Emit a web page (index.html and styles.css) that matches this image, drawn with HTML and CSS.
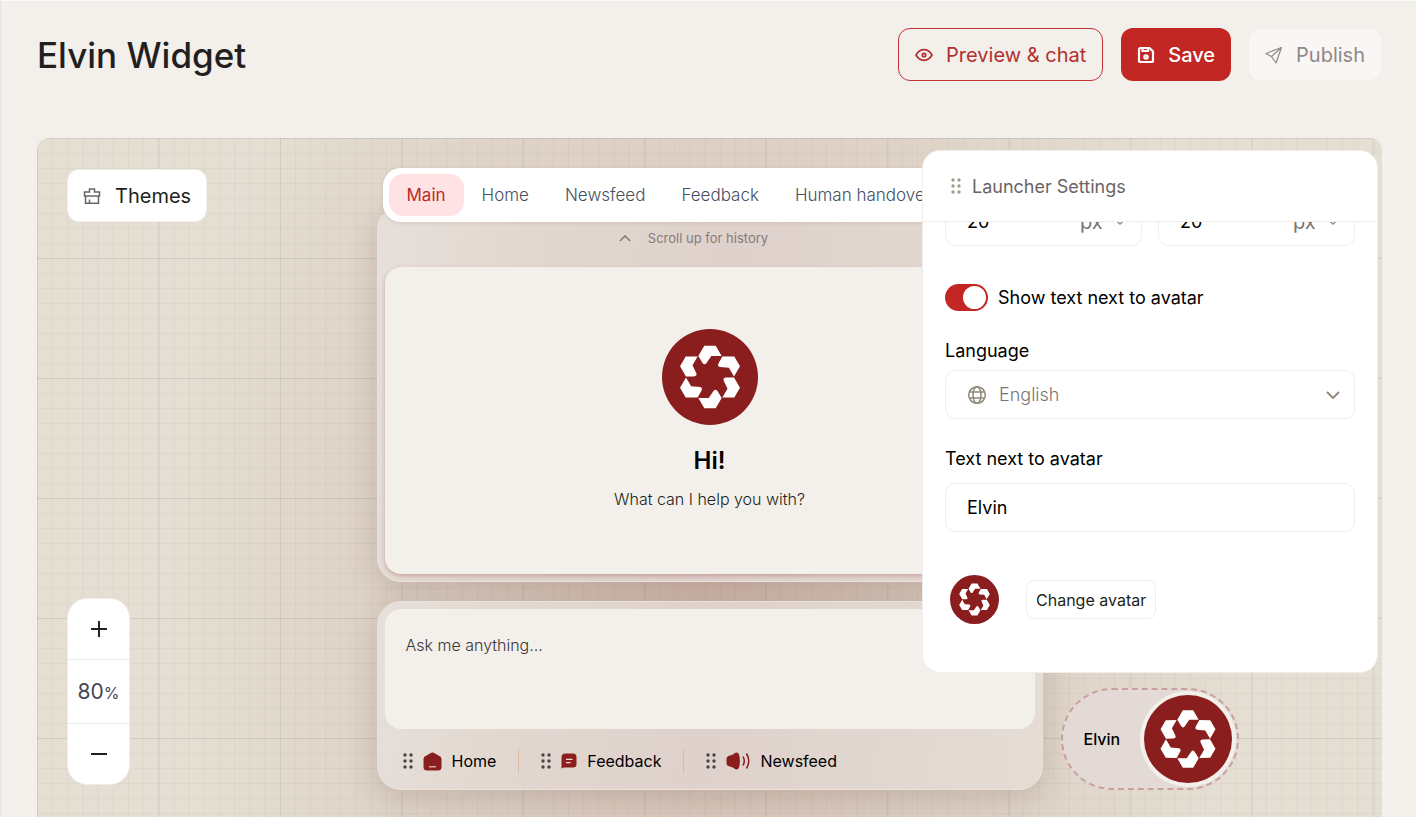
FILE: index.html
```html
<!DOCTYPE html>
<html lang="en">
<head>
    <meta charset="UTF-8">
    <meta name="viewport" content="width=device-width, initial-scale=1.0">
    <title>Elvin Widget</title>
    <link rel="stylesheet" href="styles.css">
</head>
<body>
    <!-- Shared icons -->
    <svg class="sprite" aria-hidden="true">
        <defs>
            <path id="petal" d="M-35-63L-17-94H17L35-63H4L-11-41Q-17-34-23-43Z"/>
            <symbol id="logo" viewBox="-144 -144 288 288">
                <circle r="144" fill="#8a1e1e"/>
                <g fill="#fff">
                    <use href="#petal"/>
                    <use href="#petal" transform="rotate(60)"/>
                    <use href="#petal" transform="rotate(120)"/>
                    <use href="#petal" transform="rotate(180)"/>
                    <use href="#petal" transform="rotate(240)"/>
                    <use href="#petal" transform="rotate(300)"/>
                </g>
            </symbol>
            <symbol id="grip" viewBox="0 0 10 18">
                <circle cx="2" cy="3" r="1.7"/><circle cx="8" cy="3" r="1.7"/>
                <circle cx="2" cy="9" r="1.7"/><circle cx="8" cy="9" r="1.7"/>
                <circle cx="2" cy="15" r="1.7"/><circle cx="8" cy="15" r="1.7"/>
            </symbol>
            <symbol id="chevron" viewBox="0 0 14 8">
                <path d="M1 1l6 6 6-6" fill="none" stroke="currentColor" stroke-width="1.8"/>
            </symbol>
        </defs>
    </svg>

    <header class="header">
        <h1>Elvin Widget</h1>
        <div class="actions">
            <button type="button" class="btn btn-outline">
                <svg width="18" height="18" viewBox="0 0 18 18" fill="none" stroke="currentColor" stroke-width="1.7">
                    <path d="M1 9C3 5.500 5.800 3.700 9 3.700S15 5.500 17 9C15 12.500 12.200 14.300 9 14.300S3 12.500 1 9Z"/>
                    <circle cx="9" cy="9" r="1.700"/>
                </svg>
                Preview &amp; chat
            </button>
            <button type="button" class="btn btn-save">
                <svg width="18" height="18" viewBox="0 0 18 18" fill="none" stroke="currentColor" stroke-width="2.200">
                    <path d="M3.500 2H12.500L16 5.500V14.500Q16 16 14.500 16H3.500Q2 16 2 14.500V3.500Q2 2 3.500 2Z"/>
                    <path d="M5.500 2V5H11V2"/>
                    <circle cx="9" cy="11" r="1.700"/>
                </svg>
                Save
            </button>
            <button type="button" class="btn btn-publish" disabled>
                <svg width="18" height="18" viewBox="0 0 18 18" fill="none" stroke="currentColor" stroke-width="1.200" stroke-linejoin="round">
                    <path d="M16.500 1.500L1 7.500L6.500 10.500L11 17Z"/>
                    <path d="M16.500 1.500L6.500 10.500"/>
                </svg>
                Publish
            </button>
        </div>
    </header>

    <main class="canvas">
        <div class="stage">
            <div class="tools">
                <button type="button" class="themes">
                    <svg width="18" height="18" viewBox="0 0 18 18" fill="none" stroke="#6b6464" stroke-width="1.500">
                        <path d="M1.500 9V5H6.500V2H11.500V5H16.500V9Z"/>
                        <path d="M2.500 9V16.200H15.500V9M6.500 16V12.500"/>
                    </svg>
                    Themes
                </button>
                <div class="zoom">
                    <button type="button" aria-label="Zoom in">
                        <svg width="16" height="16" viewBox="0 0 16 16" stroke="#231f20" stroke-width="2"><path d="M0 8H16M8 0V16"/></svg>
                    </button>
                    <div class="zoom-value">80<small>%</small></div>
                    <button type="button" aria-label="Zoom out">
                        <svg width="16" height="16" viewBox="0 0 16 16" stroke="#231f20" stroke-width="2"><path d="M0 8H16"/></svg>
                    </button>
                </div>
            </div>

            <div class="chat">
                <nav class="tabs">
                    <a href="#main" class="active">Main</a>
                    <a href="#home">Home</a>
                    <a href="#newsfeed">Newsfeed</a>
                    <a href="#feedback">Feedback</a>
                    <a href="#handover">Human handover</a>
                </nav>

                <section class="glass history">
                    <p class="scroll-up">
                        <svg class="up" width="12" height="7"><use href="#chevron"/></svg>
                        Scroll up for history
                    </p>
                    <div class="welcome">
                        <svg width="96" height="96"><use href="#logo"/></svg>
                        <h2>Hi!</h2>
                        <p>What can I help you with?</p>
                    </div>
                </section>

                <section class="glass composer">
                    <textarea aria-label="Message" placeholder="Ask me anything..."></textarea>
                    <div class="menu">
                        <a href="#home">
                            <svg class="grip" width="10" height="18"><use href="#grip"/></svg>
                            <svg width="19" height="19" viewBox="0 0 19 19">
                                <path d="M8.300.800Q9.500.200 10.700.800L16.800 4.300Q18.500 5.300 18.500 7.300V15Q18.500 18.500 15 18.500H4Q.500 18.500.500 15V7.300Q.500 5.300 2.200 4.300Z" fill="#8a1e1e"/>
                                <path d="M6 14.800H13" stroke="#e9c9c6" stroke-width="1.200"/>
                            </svg>
                            Home
                        </a>
                        <a href="#feedback">
                            <svg class="grip" width="10" height="18"><use href="#grip"/></svg>
                            <svg width="16" height="16" viewBox="0 0 16 16">
                                <path d="M4.500.500H12Q15.500.500 15.500 4V11.500Q15.500 14.500 12 14.500H3L.500 15.500V4Q.500.500 4.500.500Z" fill="#8a1e1e"/>
                                <path d="M5 6.300H11.500M5 9.700H9.500" stroke="#f1dcd9" stroke-width="1.300"/>
                            </svg>
                            Feedback
                        </a>
                        <a href="#newsfeed">
                            <svg class="grip" width="10" height="18"><use href="#grip"/></svg>
                            <svg width="24" height="18" viewBox="0 0 24 18">
                                <path d="M.500 7Q.500 4 4 3.500Q7 2.800 9.500.800Q12 0 13 2.500Q14.800 9 13 15.500Q12 18 9.500 17.200Q7 15.200 4 14.500Q.500 14 .500 11Z" fill="#8a1e1e"/>
                                <path d="M17 4.500Q19.500 9 17 13.500M20.500 1.500Q25 9 20.500 16.500" fill="none" stroke="#8a1e1e" stroke-width="1.500"/>
                            </svg>
                            Newsfeed
                        </a>
                    </div>
                </section>
            </div>

            <button type="button" class="launcher">
                <span>Elvin</span>
                <svg width="96" height="96" viewBox="0 0 96 96">
                    <circle cx="48" cy="48" r="48" fill="#f3efeb"/>
                    <use href="#logo" x="4" y="4" width="88" height="88"/>
                </svg>
            </button>
        </div>

        <!-- Floating settings window -->
        <aside class="settings">
            <div class="settings-head">
                <svg class="grip" width="10" height="18"><use href="#grip"/></svg>
                <h2>Launcher Settings</h2>
            </div>
            <form class="settings-body">
                <div class="sizes">
                    <div class="field">
                        <input type="text" value="20" aria-label="Side spacing">
                        <select aria-label="Side spacing unit"><option>px</option></select>
                        <svg width="10" height="6"><use href="#chevron"/></svg>
                    </div>
                    <div class="field">
                        <input type="text" value="20" aria-label="Bottom spacing">
                        <select aria-label="Bottom spacing unit"><option>px</option></select>
                        <svg width="10" height="6"><use href="#chevron"/></svg>
                    </div>
                </div>

                <div class="switch">
                    <input type="checkbox" id="showText" checked>
                    <label for="showText">Show text next to avatar</label>
                </div>

                <label class="title" for="language">Language</label>
                <div class="field language">
                    <svg width="20" height="20" viewBox="0 0 20 20" fill="none" stroke="currentColor" stroke-width="1.500">
                        <circle cx="10" cy="10" r="8.300"/>
                        <ellipse cx="10" cy="10" rx="4" ry="8.300"/>
                        <path d="M2.500 7H17.500M2.500 13H17.500"/>
                    </svg>
                    <select id="language"><option>English</option></select>
                    <svg width="14" height="8"><use href="#chevron"/></svg>
                </div>

                <label class="title" for="avatarText">Text next to avatar</label>
                <div class="field avatar-text">
                    <input type="text" id="avatarText" value="Elvin">
                </div>

                <div class="avatar-row">
                    <svg width="49" height="49"><use href="#logo"/></svg>
                    <button type="button">Change avatar</button>
                </div>
            </form>
        </aside>
    </main>
</body>
</html>
```
FILE: styles.css
```css
* {
    margin: 0;
    padding: 0;
    box-sizing: border-box;
}

body {
    font-family: 'Inter', 'Liberation Sans', sans-serif;
    color: #231f20;
    background: #f3efea;
    border-top: 1px solid #fafafa;
    border-left: 1px solid #e4e5ea;
    height: 100vh;
    overflow: hidden;
    display: flex;
    flex-direction: column;
}

button,
input,
select,
textarea {
    font-family: inherit;
    color: inherit;
    border: none;
    background: none;
    outline: none;
}

button {
    cursor: pointer;
}

a {
    text-decoration: none;
}

svg {
    display: block;
    flex-shrink: 0;
}

.sprite {
    position: absolute;
    width: 0;
    height: 0;
}

/* Header */
.header {
    display: flex;
    justify-content: space-between;
    align-items: center;
    padding: 27px 35px 57px 36px;
}

h1 {
    font-size: 35px;
    font-weight: 500;
}

.actions {
    display: flex;
    align-items: center;
    gap: 18px;
}

.btn {
    display: flex;
    align-items: center;
    gap: 13px;
    height: 53px;
    padding: 0 16px;
    border-radius: 12px;
    font-size: 20px;
}

.btn-outline {
    color: #b23030;
    border: 1px solid #c03336;
}

.btn-save {
    background: #c22724;
    color: #ffffff;
    font-weight: 500;
}

.btn-publish {
    height: 51px;
    background: #f9f7f5;
    color: #8f8989;
}

/* Canvas */
.canvas {
    position: relative;
    flex: 1;
    margin: 0 34px 0 36px;
    overflow: hidden;
    border-radius: 12px 12px 0 0;
    background-color: #e4ded3;
    background-image:
        linear-gradient(rgba(85, 95, 75, 0.1) 1px, transparent 1px),
        linear-gradient(90deg, rgba(85, 95, 75, 0.1) 1px, transparent 1px),
        linear-gradient(rgba(85, 95, 75, 0.05) 1px, transparent 1px),
        linear-gradient(90deg, rgba(85, 95, 75, 0.05) 1px, transparent 1px),
        radial-gradient(ellipse 40% 110% at 50% 60%, rgba(165, 95, 85, 0.3), rgba(185, 125, 110, 0.16) 50%, transparent);
    background-size: calc(100% / 11.07) 120px, calc(100% / 11.07) 120px, calc(100% / 88.56) 15px, calc(100% / 88.56) 15px, 100% 100%;
}

.stage {
    display: grid;
    grid-template-columns: 1fr minmax(0, 666px) 1fr;
    gap: 18px;
    padding: 30px 30px 27px;
}

.tools {
    display: flex;
    flex-direction: column;
    justify-content: space-between;
    align-items: flex-start;
    padding: 1px 0 5px;
}

.themes {
    display: flex;
    align-items: center;
    gap: 14px;
    height: 53px;
    padding: 0 15px;
    background: #ffffff;
    border: 1px solid #f3efea;
    border-radius: 12px;
    font-size: 20px;
}

.zoom {
    width: 63px;
    background: #ffffff;
    border: 1px solid #f0ede9;
    border-radius: 20px;
}

.zoom button {
    display: flex;
    align-items: center;
    justify-content: center;
    width: 100%;
    height: 60px;
}

.zoom-value {
    height: 65px;
    line-height: 64px;
    text-align: center;
    font-size: 21px;
    color: #3f4858;
    border: solid #ececec;
    border-width: 1px 0;
}

.zoom-value small {
    font-size: 16px;
}

/* Chat preview */
.chat {
    display: flex;
    flex-direction: column;
}

.tabs {
    position: relative;
    z-index: 1;
    display: flex;
    margin: 0 6px;
    padding: 6px;
    background: #ffffff;
    border-radius: 18px;
    box-shadow: 0 1px 4px rgba(90, 50, 40, 0.12);
    white-space: nowrap;
}

.tabs a {
    padding: 0 18px;
    line-height: 42px;
    border-radius: 14px;
    font-size: 17px;
    font-weight: 300;
    color: #465062;
}

.tabs .active {
    background: #ffe3e4;
    color: #c22724;
    font-weight: 400;
}

.glass {
    padding: 7px;
    border: 1px solid #ebe2dc;
    border-radius: 24px;
    background: linear-gradient(100deg, #e6dfda, #e2d8d0 20%, #dfd1cc 50%, #e2d7d0 75%, #e5dcd6);
    box-shadow: 0 8px 32px rgba(90, 60, 50, 0.2);
}

.history {
    margin-top: -16px;
    padding-top: 24px;
}

.scroll-up {
    display: flex;
    align-items: center;
    justify-content: center;
    gap: 17px;
    padding-right: 32px;
    line-height: 14px;
    margin-bottom: 22px;
    font-size: 13px;
    color: #857b78;
}

.scroll-up .up {
    transform: rotate(180deg);
}

.welcome {
    display: flex;
    flex-direction: column;
    align-items: center;
    height: 307px;
    padding-top: 62px;
    background: #f3efea;
    border-radius: 16px;
    box-shadow: 0 2px 4px rgba(140, 70, 60, 0.35);
}

.welcome h2 {
    margin-top: 20px;
    line-height: 32px;
    font-size: 24px;
    font-weight: 600;
    color: #000000;
}

.welcome p {
    margin-top: 12px;
    line-height: 20px;
    font-size: 16px;
    font-weight: 300;
}

.composer {
    margin-top: 19px;
}

.composer textarea {
    display: block;
    width: 100%;
    height: 120px;
    padding: 26px 21px;
    background: #f3efea;
    border-radius: 16px;
    font-size: 16px;
    font-weight: 300;
    line-height: 20px;
    resize: none;
}

.composer textarea::placeholder {
    color: #3b3636;
}

.menu {
    display: flex;
    align-items: center;
    padding: 20px 18px 9px;
}

.menu a {
    display: flex;
    align-items: center;
    gap: 10px;
    line-height: 24px;
    font-size: 16px;
    color: #000000;
}

.menu a + a {
    margin-left: 22px;
    padding-left: 22px;
    border-left: 1px solid #d9bda5;
}

.menu .grip {
    fill: #4a4544;
}

/* Launcher */
.launcher {
    align-self: end;
    justify-self: start;
    display: flex;
    align-items: center;
    gap: 20px;
    height: 102px;
    padding: 0 1px 0 21px;
    border: 2px dashed #c9a09b;
    border-radius: 51px;
    background: #e4dad5;
    font-size: 16px;
    font-weight: 500;
    color: #000000;
}

/* Launcher settings */
.settings {
    position: absolute;
    z-index: 2;
    top: 12px;
    right: 4px;
    width: 456px;
    max-width: 100%;
    background: #ffffff;
    border: 1px solid #f1ede8;
    border-radius: 18px;
    overflow: hidden;
}

.settings-head {
    display: flex;
    align-items: center;
    gap: 11px;
    height: 71px;
    padding: 0 28px;
    border-bottom: 1px solid #f1ede8;
}

.settings-head .grip {
    fill: #a29a8a;
}

.settings-head h2 {
    font-size: 18px;
    font-weight: 400;
    color: #6b6464;
}

.settings-body {
    display: flex;
    flex-direction: column;
    height: 450px;
    padding: 0 22px;
    overflow: hidden;
    font-size: 18px;
    color: #000000;
}

.sizes {
    display: grid;
    grid-template-columns: repeat(2, minmax(0, 1fr));
    gap: 16px;
    margin-top: -25px;
}

.field {
    display: flex;
    align-items: center;
    height: 49px;
    padding: 0 21px;
    border: 1px solid #f1ede8;
    border-radius: 10px;
    color: #8f8878;
    flex-shrink: 0;
}

.field input {
    flex: 1;
    min-width: 0;
    font-size: 18px;
    color: #000000;
}

.field select {
    appearance: none;
    font-size: 18px;
    color: #7a7373;
}

.sizes .field {
    gap: 12px;
    padding-right: 16px;
}

.sizes select {
    font-size: 20px;
}

.switch {
    display: flex;
    align-items: center;
    gap: 10px;
    margin-top: 38px;
}

.switch input {
    appearance: none;
    display: flex;
    justify-content: flex-end;
    width: 43px;
    height: 27px;
    padding: 2px;
    border-radius: 14px;
    background: #c22724;
}

.switch input::before {
    content: '';
    width: 23px;
    height: 23px;
    border-radius: 50%;
    background: #ffffff;
}

.title {
    margin-top: 28px;
    margin-bottom: 7px;
    line-height: 24px;
}

.language {
    gap: 12px;
    padding-right: 14px;
}

.language select {
    flex: 1;
    font-weight: 300;
}

.avatar-text {
    margin-top: 5px;
}

.avatar-row {
    display: flex;
    align-items: center;
    gap: 27px;
    margin-top: 43px;
    padding-left: 5px;
}

.avatar-row button {
    height: 39px;
    padding: 0 9px;
    border: 1px solid #f1ede8;
    border-radius: 8px;
    font-size: 16px;
    color: #231f20;
}
```
